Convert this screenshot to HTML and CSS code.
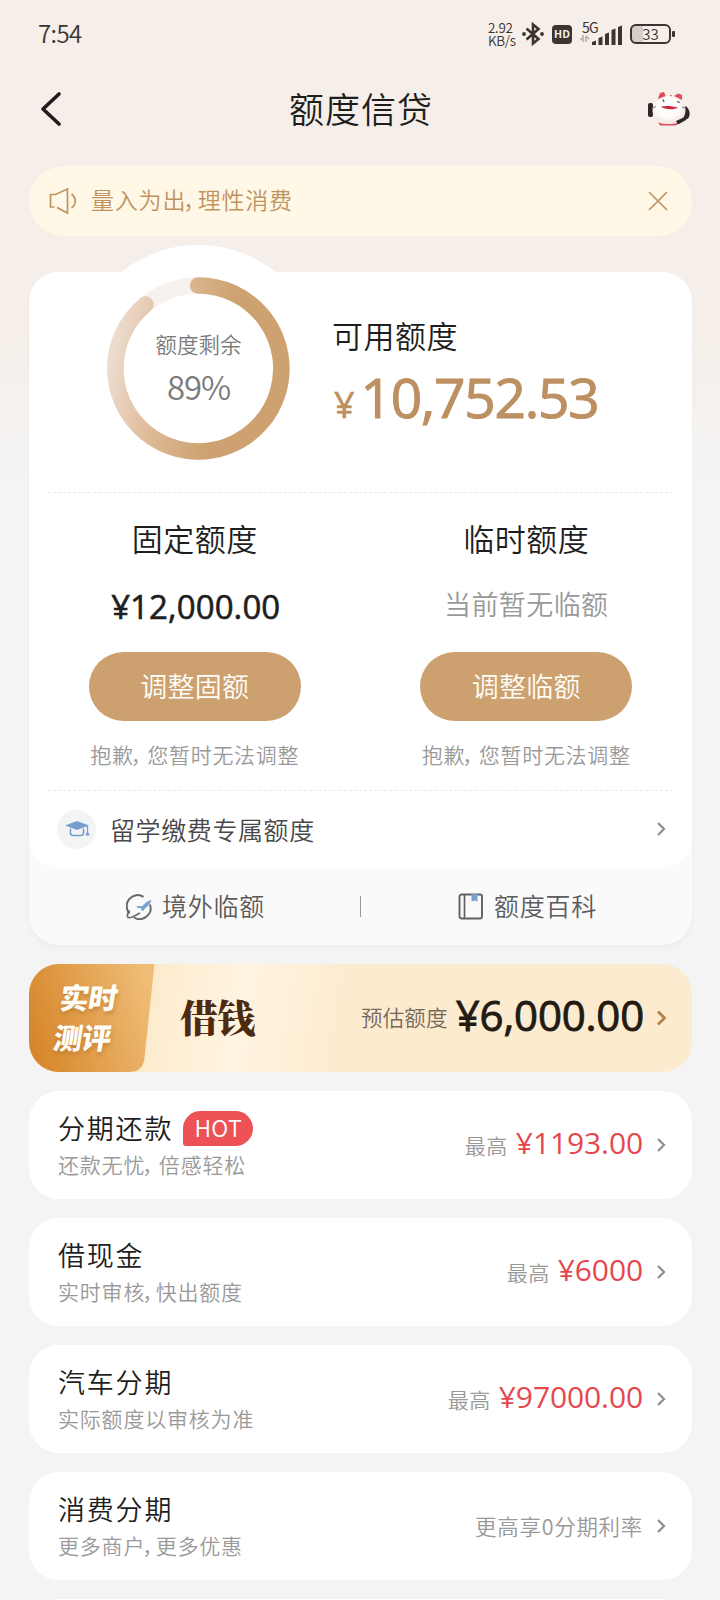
FILE: index.html
```html
<!DOCTYPE html>
<html lang="zh-CN">
<head>
<meta charset="utf-8">
<title>额度信贷</title>
<link rel="stylesheet" href="styles.css">
</head>
<body>
<div class="screen">
  <header class="status">
    <span class="clock">7:54</span>
    <div class="status-right">
      <span class="speed">2.92<br>KB/s</span>
      <svg class="bt" width="22" height="24" viewBox="0 0 22 24" fill="none" stroke="#3b3532" stroke-width="2.600"><path d="M4.500 6.500 16.500 17 11 21.500V2.500L16.500 7 4.500 17.500"/><circle cx="2" cy="12" r="1" stroke-width="1.800"/><circle cx="20" cy="12" r="1" stroke-width="1.800"/></svg>
      <span class="hd">HD</span>
      <div class="signal">
        <span class="net">5G</span>
        <svg width="42" height="23" viewBox="0 0 42 23"><path d="M0 16h3v-4M3 12v7M6 19v-6M6 13l3 3" stroke="#b5afab" stroke-width="1.600" fill="none"/><path d="M12 22v-3l4-1.500V22zM18.500 22v-7l4-1.500V22zM25 22V11l4-1.500V22zM31.500 22V7l4-1.500V22zM38 22V4l4-1.500V22z" fill="#3b3532"/></svg>
      </div>
      <div class="battery"><span>33</span></div>
    </div>
  </header>

  <nav class="nav">
    <svg class="back" width="24" height="38" viewBox="0 0 24 38" fill="none" stroke="#1f1b1a" stroke-width="3.600" stroke-linecap="round" stroke-linejoin="round"><path d="M20 4 4 19 20 34"/></svg>
    <h1>额度信贷</h1>
    <svg class="mascot" width="44" height="38" viewBox="0 0 44 38"><defs><radialGradient id="face" cx=".45" cy=".4" r=".65"><stop offset=".5" stop-color="#fffdfc"/><stop offset="1" stop-color="#efdcd8"/></radialGradient></defs><path d="M11 9 13 3 17 2 19 7zM27 6 31 3.500 35 5 35 10z" fill="#dd4a5e"/><circle cx="24" cy="6" r="1" fill="#dd4a5e"/><rect x="1" y="13" width="5" height="14" rx="2" fill="#2c2626"/><path d="M37 16c6 0 8 12 2 13.500l-4-.5c3-4 3-8 2-13z" fill="#2c2626"/><ellipse cx="22" cy="20.500" rx="16.500" ry="14.500" fill="url(#face)"/><path d="M5 18l4-1.500M35 17l4 1.500" stroke="#777" stroke-width="1"/><path d="M16 9.500l1 2.500M30 11.500l3 1" stroke="#555" stroke-width="1.300"/><path d="M14 16.500c6-1 11-.5 17 1-3 2.500-14 2.500-17-1z" fill="#c82c3c"/><path d="M11 32.500c6 2 14 2 21 0l-3 3H13z" fill="#d65260"/><path d="M29 31l9-4 1 3-8 4.500z" fill="#2c2626"/></svg>
  </nav>

  <section class="notice">
    <svg width="28" height="28" viewBox="0 0 28 28" fill="none" stroke="#bf935f" stroke-width="1.700"><path d="M5.500 20H1.500V7.500h5L18.500 2v24L8 20.500M22.500 7c5 4 5 10 0 14"/></svg>
    <p>量入为出<i class="comma">，</i>理性消费</p>
    <svg class="close" width="20" height="20" viewBox="0 0 20 20" stroke="#bf935f" stroke-width="1.700" stroke-linecap="round"><path d="M1.500 1.500l17 17M18.500 1.500l-17 17"/></svg>
  </section>

  <main>
    <section class="quota">
      <div class="quota-main">
        <div class="summary">
          <div class="ring">
            <svg width="184" height="184" viewBox="0 0 184 184" fill="none" stroke-width="16.500">
              <defs><linearGradient id="ringFill" x1="0" y1=".3" x2="1" y2=".5"><stop offset="0" stop-color="#ecdccf"/><stop offset=".3" stop-color="#dfbb99"/><stop offset=".65" stop-color="#cda270"/><stop offset="1" stop-color="#cda270"/></linearGradient></defs>
              <circle cx="91.500" cy="91.500" r="83" stroke="#f8f2ee"/>
              <path d="M91 8.500A83 83 0 1 1 38.500 27.500" stroke="url(#ringFill)" stroke-linecap="round"/>
            </svg>
            <div class="ring-text"><span>额度剩余</span><b>89%</b></div>
          </div>
          <div class="available">
            <h2>可用额度</h2>
            <div class="total"><small>¥</small>10,752.53</div>
          </div>
        </div>
        <div class="columns">
          <div class="column">
            <h2>固定额度</h2>
            <div class="amount">¥12,000.00</div>
            <button class="pill">调整固额</button>
            <p class="caption">抱歉<i class="comma wide">，</i>您暂时无法调整</p>
          </div>
          <div class="column">
            <h2>临时额度</h2>
            <div class="empty">当前暂无临额</div>
            <button class="pill">调整临额</button>
            <p class="caption">抱歉<i class="comma wide">，</i>您暂时无法调整</p>
          </div>
        </div>
        <div class="study">
          <span class="cap"><svg width="26" height="18" viewBox="0 0 26 18" fill="none"><path d="M1 5.500 13 1l12 4.500-12 4.500z" fill="#779fcc"/><path d="M6.500 8.500v4.500q0 2.500 3 2.500h7q3 0 3-2.500V8.500" stroke="#779fcc" stroke-width="1.600"/><path d="M23.500 6v8" stroke="#779fcc" stroke-width="1.300"/><path d="M23.500 11l2.200 4.500h-4.400z" fill="#779fcc"/></svg></span>
          <span class="study-label">留学缴费专属额度</span>
          <svg class="chev" width="9" height="16" viewBox="0 0 9 16"><path d="M1 2 7 8 1 14"/></svg>
        </div>
      </div>
      <div class="links">
        <a class="link"><svg width="26" height="26" viewBox="0 0 26 26" fill="none"><path d="M17.500 2.800A11 11 0 0 0 3.500 19.500M24 10.500A11 11 0 0 1 8 23.500" stroke="#686868" stroke-width="2"/><path d="M3.500 16.500c-4 6-2 8.500 3 6.500L14 19" stroke="#686868" stroke-width="1.700"/><path d="M11 12.500h5L21 8l4-1.500-2 4-5 4.500-.5 1.500-2-.5.500-2-4.500-.5z" fill="#79a1d0" stroke="#79a1d0" stroke-width=".8"/></svg><span>境外临额</span></a>
        <i class="bar"></i>
        <a class="link"><svg width="26" height="27" viewBox="0 0 26 27" fill="none"><rect x="1.500" y="1.500" width="22.500" height="24" rx="2" stroke="#606060" stroke-width="1.900"/><path d="M13.500 1h6v7.500l-3-1-3 1z" fill="#79a1d0"/><path d="M6.500 2v23" stroke="#606060" stroke-width="1.700"/></svg><span>额度百科</span></a>
      </div>
    </section>

    <section class="banner">
      <div class="tag">
        <svg class="tag-bg" width="126" height="108" viewBox="0 0 126 108"><defs><linearGradient id="tagFill" x1="0" y1=".6" x2="1" y2=".35"><stop offset="0" stop-color="#d7872b"/><stop offset="1" stop-color="#efbd77"/></linearGradient></defs><path d="M0 0H125.500L115.500 94Q114 108 100 108H0z" fill="url(#tagFill)"/></svg>
        <div class="tag-text"><span>实时</span><span>测评</span></div>
      </div>
      <strong>借钱</strong>
      <div class="right"><span class="estimate">预估额度</span><span class="big">¥6,000.00</span>
      <svg class="chev gold" width="11" height="18" viewBox="0 0 11 18"><path d="M2 2.500 8.500 9 2 15.500"/></svg></div>
    </section>

    <section class="item">
      <div class="left"><h3>分期还款<em>HOT</em></h3><p>还款无忧<i class="comma wide">，</i>倍感轻松</p></div>
      <div class="right"><span class="label">最高</span><span class="price">¥1193.00</span><svg class="chev" width="9" height="16" viewBox="0 0 9 16"><path d="M1 2 7 8 1 14"/></svg></div>
    </section>
    <section class="item">
      <div class="left"><h3>借现金</h3><p>实时审核<i class="comma">，</i>快出额度</p></div>
      <div class="right"><span class="label">最高</span><span class="price">¥6000</span><svg class="chev" width="9" height="16" viewBox="0 0 9 16"><path d="M1 2 7 8 1 14"/></svg></div>
    </section>
    <section class="item">
      <div class="left"><h3>汽车分期</h3><p>实际额度以审核为准</p></div>
      <div class="right"><span class="label">最高</span><span class="price">¥97000.00</span><svg class="chev" width="9" height="16" viewBox="0 0 9 16"><path d="M1 2 7 8 1 14"/></svg></div>
    </section>
    <section class="item">
      <div class="left"><h3>消费分期</h3><p>更多商户<i class="comma">，</i>更多优惠</p></div>
      <div class="right"><span class="label solo">更高享0分期利率</span><svg class="chev" width="9" height="16" viewBox="0 0 9 16"><path d="M1 2 7 8 1 14"/></svg></div>
    </section>
    <section class="item"></section>
  </main>
</div>
</body>
</html>
```
FILE: styles.css
```css
* { box-sizing: border-box; margin: 0; padding: 0; }
body {
  width: 720px;
  height: 1600px;
  overflow: hidden;
  font-family: "Noto Sans CJK SC", sans-serif;
  font-weight: 350;
  color: #1e1e1e;
  background: #f4f4f4;
}
h1, h2, h3 { font-weight: 350; }
svg { flex: none; display: block; }
.screen {
  height: 1600px;
  overflow: hidden;
  background: linear-gradient(#f6efe9 0, #f6efe9 330px, #f4f4f4 485px);
}

.status {
  height: 68px;
  padding: 0 49px 0 38px;
  display: flex;
  justify-content: space-between;
  align-items: center;
  color: #3b3532;
}
.clock { font-size: 24px; letter-spacing: -.6px; line-height: 66px; padding-bottom: 2px; }
.status-right { display: flex; align-items: center; }
.speed { width: 34px; font-size: 13.500px; line-height: 13px; letter-spacing: -.3px; }
.hd {
  margin-left: 8px;
  width: 20px;
  height: 19px;
  border-radius: 4px;
  background: #3b3532;
  color: #f6efe9;
  font: 700 10.500px/19px "Open Sans", sans-serif;
  text-align: center;
}
.signal { position: relative; margin-left: 8px; width: 42px; height: 23px; }
.net { position: absolute; left: 2px; top: -3px; font-size: 14px; line-height: 14px; font-weight: 400; letter-spacing: -.8px; }
.battery {
  position: relative;
  margin-left: 8px;
  width: 41px;
  height: 20px;
  border: 2px solid #3b3532;
  border-radius: 6px;
  background: linear-gradient(90deg, #d5cdc9 11px, transparent 11px);
  font-size: 15px;
  line-height: 15px;
  text-align: center;
}
.battery::after { content: ""; position: absolute; right: -6px; top: 5px; width: 3px; height: 6px; border-radius: 1px; background: #3b3532; }

.nav {
  height: 82px;
  padding: 0 29px 0 39px;
  display: flex;
  align-items: center;
  justify-content: space-between;
}
.nav h1 { font-size: 35px; letter-spacing: 1px; line-height: 80px; margin-left: 12px; padding-bottom: 2px; }

.notice {
  margin: 16px 28px 0 29px;
  height: 70px;
  padding: 0 24px 0 20px;
  border-radius: 35px;
  background: #fff8e6;
  color: #bf935f;
  display: flex;
  align-items: center;
}
.notice p { flex: 1; margin-left: 14px; font-size: 23px; letter-spacing: .8px; padding-bottom: 4px; }
.comma { display: inline-block; width: .64em; margin-left: -.14em; font-style: normal; white-space: nowrap; letter-spacing: 0; font-feature-settings: "halt"; }
.comma.wide { width: .79em; margin-left: -.14em; }

main { padding: 36px 28px 0 29px; display: flex; flex-direction: column; gap: 19px; }
.quota { height: 673px; border-radius: 30px; background: #fafafa; box-shadow: 0 3px 5px rgba(0,0,0,.035); }
.quota-main { height: 596px; padding: 0 19px; border-radius: 30px; background: #fff; }
.summary { height: 221px; display: flex; border-bottom: 1px dashed #e9e9e9; }
.ring {
  margin: -27px 0 0 27px;
  width: 247px;
  height: 247px;
  flex: none;
  border-radius: 50%;
  background: #fff;
  display: grid;
  place-items: center;
}
.ring svg, .ring-text { grid-area: 1 / 1; }
.ring-text { display: flex; flex-direction: column; align-items: center; color: #7b7b7b; padding-top: 5px; }
.ring-text span { font-size: 21.500px; line-height: 30px; }
.ring-text b { font-weight: 350; font-size: 33px; line-height: 54px; letter-spacing: -1.200px; }
.available { margin-left: 10px; padding-top: 41px; }
h2 { font-size: 31px; line-height: 44px; letter-spacing: .5px; }
.total, .amount, .big, .price { font-family: "Open Sans", sans-serif; white-space: nowrap; font-weight: 400; }
.total { margin-top: 5px; font-size: 55px; line-height: 70px; color: #bd9062; letter-spacing: -1.200px; -webkit-text-stroke: 1.100px #bd9062; }
.total small { font-size: 36px; margin: 0 7px 0 2px; -webkit-text-stroke-width: .6px; }

.columns { height: 297px; display: grid; grid-template-columns: 1fr 1fr; margin: 0 -19px; position: relative; }
.columns::after { content: ""; position: absolute; left: 19px; right: 19px; bottom: -1px; border-bottom: 1px dashed #e9e9e9; }
.column { padding-top: 23px; display: flex; flex-direction: column; align-items: center; }
.amount { margin-top: 24px; font-size: 33px; line-height: 46px; letter-spacing: .1px; padding-left: 2px; -webkit-text-stroke: .6px #1e1e1e; }
.empty { margin-top: 21px; margin-bottom: 3px; font-size: 27px; line-height: 46px; color: #999; letter-spacing: .4px; }
.pill {
  margin-top: 22px;
  width: 212px;
  height: 69px;
  padding-bottom: 3px;
  border: 0;
  border-radius: 35px;
  background: #cca16f;
  color: #fffdf8;
  font: inherit;
  font-size: 27px;
  letter-spacing: .2px;
}
.caption { margin-top: 18px; font-size: 21px; line-height: 30px; color: #999; letter-spacing: .7px; }

.study { height: 78px; padding: 0 7px 0 9px; display: flex; align-items: center; }
.cap { width: 39px; height: 39px; border-radius: 50%; background: #f3f4f6; display: grid; place-items: center; }
.study-label { flex: 1; margin-left: 14px; font-size: 25px; letter-spacing: .6px; color: #484848; }
.chev { fill: none; stroke: #909090; stroke-width: 2.300; }
.chev.gold { stroke: #b1824b; stroke-width: 2.800; }
.links { height: 77px; display: grid; grid-template-columns: 1fr 1px 1fr; align-items: center; }
.link { display: flex; justify-content: center; align-items: center; gap: 10px; padding-left: 2px; font-size: 25px; letter-spacing: .7px; color: #5c5c5c; }
.link span { padding-bottom: 3px; }
.bar { width: 1px; height: 21px; background: #999; }

.banner {
  height: 108px;
  border-radius: 30px;
  overflow: hidden;
  display: flex;
  align-items: center;
  background: linear-gradient(100deg, #fde9ca 110px, #fff4e1 215px, #fdebd0 315px, #fdebd0);
}
.tag { width: 126px; height: 108px; display: grid; flex: none; }
.tag-bg, .tag-text { grid-area: 1 / 1; }
.tag-text {
  display: flex;
  flex-direction: column;
  padding: 12px 0 0 28px;
  color: #fffdf8;
  font-size: 29px;
  line-height: 40px;
  font-weight: 900;
  letter-spacing: -.5px;
  transform: skewX(-9deg);
  text-shadow: 1px 3px 4px rgba(150,85,15,.35);
}
.banner strong { margin-left: 25px; padding-bottom: 5px; font-family: "Noto Serif CJK SC", "Noto Sans CJK SC", serif; font-weight: 900; font-size: 38px; letter-spacing: -.5px; color: #4d2a10; }
.right { margin-left: auto; display: flex; align-items: center; }
.estimate { font-size: 21.500px; letter-spacing: .2px; color: #77695a; padding-bottom: 3px; }
.big { margin-left: 8px; padding-bottom: 7px; font-size: 42px; line-height: 60px; color: #231a12; letter-spacing: -.2px; -webkit-text-stroke: .9px #231a12; }
.banner .right { padding-right: 25px; }
.banner .chev { margin-left: 12px; }

.item { height: 108px; flex: none; padding: 0 26px 0 29px; border-radius: 30px; background: #fff; display: flex; }
.left { padding-top: 17px; }
.left h3 { display: flex; align-items: center; font-size: 27px; line-height: 40px; letter-spacing: 1.800px; }
.left p { font-size: 21px; line-height: 32px; color: #999; letter-spacing: .8px; }
em {
  margin-left: 10px;
  width: 70px;
  height: 35px;
  border-radius: 18px 18px 18px 3px;
  background: #ed5356;
  color: #fff;
  font-size: 23px;
  line-height: 33px;
  font-style: normal;
  text-align: center;
  letter-spacing: .3px;
}
.label { font-size: 21px; color: #999; letter-spacing: .5px; }
.label.solo { font-size: 21.500px; letter-spacing: .7px; padding-bottom: 2px; }
.price { margin-left: 8px; padding-bottom: 4px; font-size: 30px; line-height: 44px; color: #e4484f; letter-spacing: -.1px; }
.item .chev { margin-left: 14px; }
```
